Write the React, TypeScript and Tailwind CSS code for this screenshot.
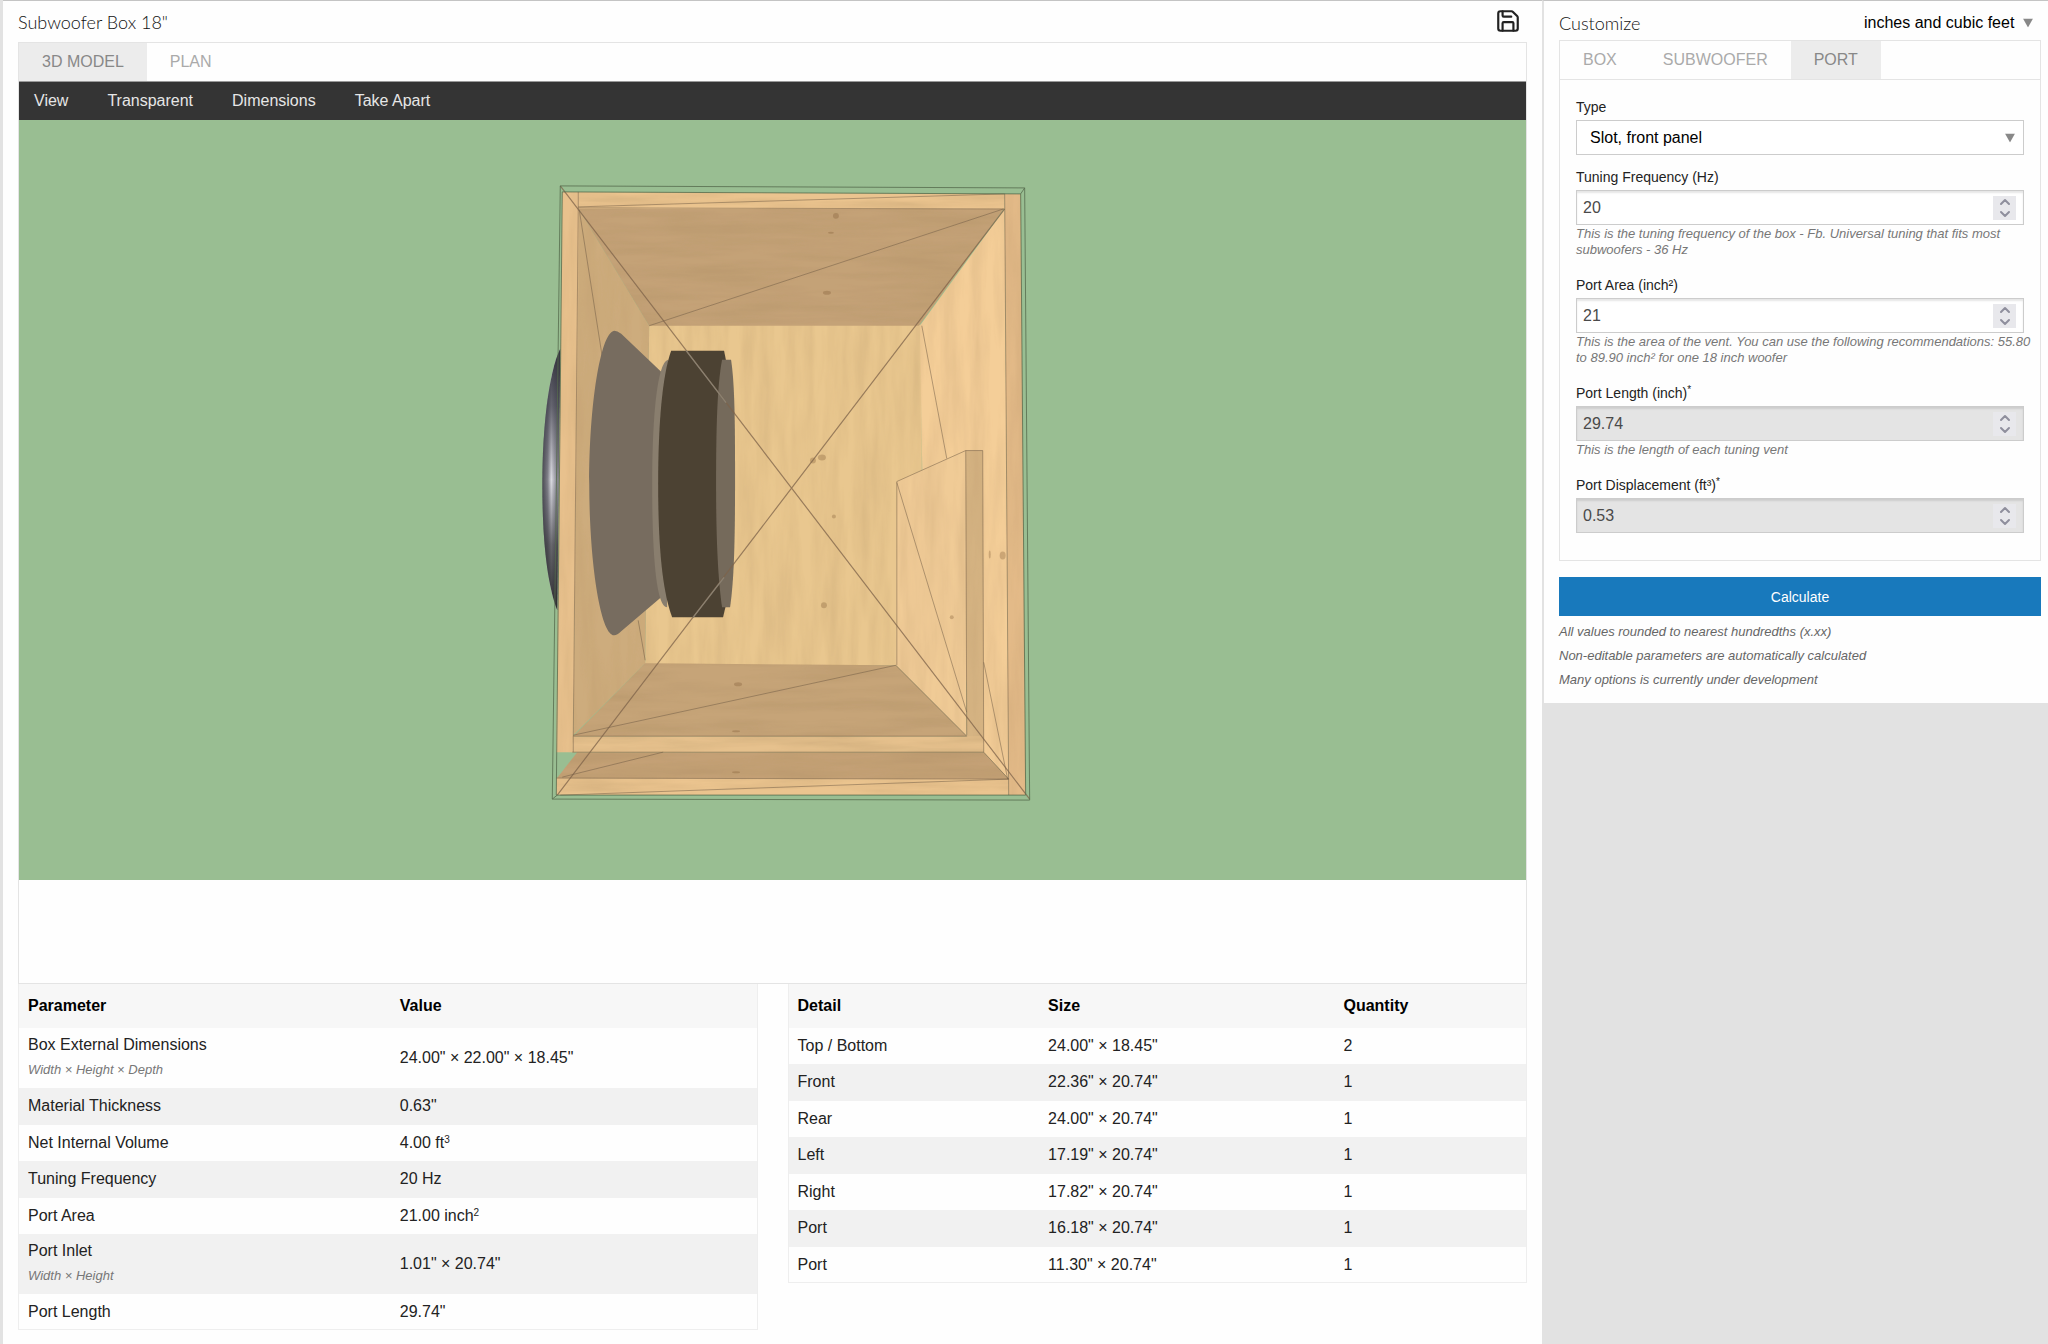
import { useState } from "react";
import type { ReactNode } from "react";
import { ChevronDown, ChevronUp, Save } from "lucide-react";

const MODEL_TABS = ["3D MODEL", "PLAN"] as const;
const PARAM_TABS = ["BOX", "SUBWOOFER", "PORT"] as const;
const MENU = ["View", "Transparent", "Dimensions", "Take Apart"];

type Param = { name: string; note?: string; value: ReactNode };

const params: Param[] = [
  { name: "Box External Dimensions", note: "Width × Height × Depth", value: '24.00" × 22.00" × 18.45"' },
  { name: "Material Thickness", value: '0.63"' },
  { name: "Net Internal Volume", value: <>4.00 ft<Sup>3</Sup></> },
  { name: "Tuning Frequency", value: "20 Hz" },
  { name: "Port Area", value: <>21.00 inch<Sup>2</Sup></> },
  { name: "Port Inlet", note: "Width × Height", value: '1.01" × 20.74"' },
  { name: "Port Length", value: '29.74"' },
];

const details = [
  ["Top / Bottom", '24.00" × 18.45"', "2"],
  ["Front", '22.36" × 20.74"', "1"],
  ["Rear", '24.00" × 20.74"', "1"],
  ["Left", '17.19" × 20.74"', "1"],
  ["Right", '17.82" × 20.74"', "1"],
  ["Port", '16.18" × 20.74"', "1"],
  ["Port", '11.30" × 20.74"', "1"],
];

const notes = [
  "All values rounded to nearest hundredths (x.xx)",
  "Non-editable parameters are automatically calculated",
  "Many options is currently under development",
];

function Sup({ children }: { children: ReactNode }) {
  return <sup className="text-[10px]">{children}</sup>;
}

function Tabs({
  tabs,
  active,
  onSelect,
}: {
  tabs: readonly string[];
  active: string;
  onSelect: (tab: string) => void;
}) {
  return (
    <div role="tablist" className="flex h-[38px]">
      {tabs.map((t) => (
        <button
          key={t}
          role="tab"
          aria-selected={t === active}
          onClick={() => onSelect(t)}
          className={`px-[23px] text-base ${
            t === active ? "bg-[#ececec] text-[#888888]" : "text-[#aaaaaa]"
          }`}
        >
          {t}
        </button>
      ))}
    </div>
  );
}

function NumberField({
  id,
  label,
  initial,
  hint,
  readOnly = false,
}: {
  id: string;
  label: ReactNode;
  initial: string;
  hint?: ReactNode;
  readOnly?: boolean;
}) {
  const [value, setValue] = useState(initial);
  const step = (by: number) => !readOnly && setValue(String(Number(value) + by));

  return (
    <div>
      <label htmlFor={id} className="block h-[25px] text-sm leading-6">
        {label}
      </label>
      <div
        className={`flex h-[35px] items-center border border-[#cccccc] pr-[7px] shadow-[inset_0_2px_2px_rgba(0,0,0,0.1)] ${
          readOnly ? "bg-[#e4e4e4]" : "bg-white"
        }`}
      >
        <input
          id={id}
          type="number"
          value={value}
          readOnly={readOnly}
          onChange={(e) => setValue(e.target.value)}
          className="min-w-0 flex-1 bg-transparent px-1.5 text-base text-[#4a4a4a] outline-none [appearance:textfield]"
        />
        <div className="flex h-6 w-[23px] flex-col items-center justify-center bg-[#e8e8ec] text-[#8f8f9d]">
          <button aria-label="Increase" onClick={() => step(1)}>
            <ChevronUp size={16} strokeWidth={3} className="-my-0.5 block" />
          </button>
          <button aria-label="Decrease" onClick={() => step(-1)}>
            <ChevronDown size={16} strokeWidth={3} className="-my-0.5 block" />
          </button>
        </div>
      </div>
      {hint && <p className="-mr-2 pt-px text-[13px] leading-4 text-[#777777] italic">{hint}</p>}
    </div>
  );
}

function BoxModel() {
  return (
    <svg
      viewBox="18 119 1509 761"
      className="block aspect-[1509/761] w-full bg-[#99be92]"
      role="img"
      aria-label="Subwoofer box"
    >
      <defs>
        <linearGradient id="dome" x1="0" y1="0" x2="1" y2="0">
          <stop offset="0" stopColor="#4a4a52" />
          <stop offset="0.3" stopColor="#85858d" />
          <stop offset="0.5" stopColor="#e4e4ea" />
          <stop offset="0.7" stopColor="#a9a9b2" />
          <stop offset="1" stopColor="#6c6670" />
        </linearGradient>
        <linearGradient id="domeShade" x1="0" y1="0" x2="0" y2="1">
          <stop offset="0" stopColor="#33333c" />
          <stop offset="0.22" stopColor="#3c3c48" stopOpacity="0.75" />
          <stop offset="0.5" stopColor="#444450" stopOpacity="0.05" />
          <stop offset="0.75" stopColor="#333338" stopOpacity="0.7" />
          <stop offset="1" stopColor="#2c2c30" />
        </linearGradient>
        <filter id="grainV" x="0" y="0" width="1" height="1">
          <feTurbulence type="fractalNoise" baseFrequency="0.07 0.009" numOctaves="4" seed="4" />
          <feColorMatrix values="0 0 0 0 0.5  0 0 0 0 0.32  0 0 0 0 0.15  0.55 0 0 0 -0.18" />
          <feComposite in2="SourceGraphic" operator="in" result="grain" />
          <feMerge>
            <feMergeNode in="SourceGraphic" />
            <feMergeNode in="grain" />
          </feMerge>
        </filter>
        <filter id="grainH" x="0" y="0" width="1" height="1">
          <feTurbulence type="fractalNoise" baseFrequency="0.009 0.09" numOctaves="4" seed="9" />
          <feColorMatrix values="0 0 0 0 0.4  0 0 0 0 0.26  0 0 0 0 0.12  0.6 0 0 0 -0.2" />
          <feComposite in2="SourceGraphic" operator="in" result="grain" />
          <feMerge>
            <feMergeNode in="SourceGraphic" />
            <feMergeNode in="grain" />
          </feMerge>
        </filter>
      </defs>

      {/* woofer frame in front of the baffle */}
      <path d="M560 348C548 372 542 430 542 483C542 540 547 585 557 610Z" fill="url(#dome)" />
      <path d="M560 348C548 372 542 430 542 483C542 540 547 585 557 610Z" fill="url(#domeShade)" />

      {/* rear panel and side walls */}
      <g filter="url(#grainV)">
        <path d="M649 324H922V665H645Z" fill="#e9c78f" />
        <path d="M578 207L649 325L645 663L573 735Z" fill="#cdac7d" />
        <path d="M1005 208L920 325L923 500L984 752L1009 779Z" fill="#f4ce98" />
        <path d="M897 481L966 450L967 736L896 665Z" fill="#f0cb96" />
        <path d="M966 450H983L984 737H967Z" fill="#d6b483" />
        <path d="M562 191H579L573 752H556Z" fill="#e8c18d" />
        <path d="M1005 193H1021L1026 795H1009Z" fill="#e3ba88" />
      </g>
      {/* top, shelf and bottom */}
      <g filter="url(#grainH)">
        <path d="M578 207L1004 208L919 325H649Z" fill="#c4a277" />
        <path d="M645 663L896 665L967 736H573Z" fill="#c6a478" />
        <path d="M577 752H984L1009 779H556Z" fill="#c4a176" />
        <path d="M578 191L1005 193V208H578Z" fill="#ebc48f" />
        <path d="M572 736H984V752H572Z" fill="#e6c18d" />
        <path d="M556 778L1009 779V795H556Z" fill="#ebc48f" />
      </g>

      {/* knots */}
      <g fill="#7a5530" opacity="0.3">
        <ellipse cx="836" cy="215" rx="3" ry="3" />
        <ellipse cx="831" cy="232" rx="3" ry="1" />
        <ellipse cx="827" cy="292" rx="4" ry="2" />
        <ellipse cx="822" cy="457" rx="4" ry="3" />
        <ellipse cx="813" cy="460" rx="3" ry="3" />
        <ellipse cx="824" cy="605" rx="3" ry="3" />
        <ellipse cx="834" cy="516" rx="2" ry="2" />
        <ellipse cx="1003" cy="555" rx="3" ry="4" />
        <ellipse cx="990" cy="554" rx="1" ry="4" />
        <ellipse cx="952" cy="617" rx="2" ry="2" />
        <ellipse cx="736" cy="772" rx="4" ry="1" />
        <ellipse cx="736" cy="731" rx="4" ry="1" />
        <ellipse cx="738" cy="684" rx="4" ry="2" />
      </g>

      {/* wall wireframe, partly hidden by the woofer */}
      <path d="M579 209L612 420M638 620L645 660" fill="none" stroke="#6f5a45" strokeOpacity="0.5" />

      {/* woofer */}
      <path
        d="M614 330C600 332 589 405 589 483C589 560 600 635 614 635Q617 635 621 631L661 597V371L621 333Q617 330 614 330Z"
        fill="#776c5f"
      />
      <path d="M668 359C656 362 652 425 652 483C652 545 655 607 667 607Z" fill="#897e6e" />
      <path d="M671 350H724L727 365V600L723 617H672C662 590 658 545 658 483C658 425 662 375 671 350Z" fill="#4c4233" />
      <path d="M722 359H731C735 385 735 430 735 483C735 540 734 580 730 607H722C718 580 716 540 716 483C716 430 717 385 722 359Z" fill="#756a5b" />

      {/* wireframe */}
      <g fill="none" stroke="#6f5a45" strokeOpacity="0.5">
        <path d="M578 191V207L573 736V752M1005 193L1009 795M578 207L1004 208M573 736H967M572 752H984M556 778L1009 779" />
        <path d="M578 206L1005 193M649 325L1004 208M922 325L947 458" />
        <path d="M573 735L896 665M896 665L967 736M562 777L663 752M560 795L1009 779" />
        <path d="M897 665V481L966 450H983L984 752M966 450L967 735M897 482L967 712M984 662L1008 779M984 752L1009 779" />
      </g>
      <g fill="none" stroke="#7d634a" strokeWidth="1.2" strokeOpacity="0.75">
        <path d="M560 185L1030 799M1005 208L557 795" />
      </g>
      <g fill="none" stroke="#566b4c" strokeOpacity="0.8">
        <path d="M560 185L1025 187L1030 800L552 799Z" />
        <path d="M562 191L1021 193L1026 795H556L562 191ZM1021 193L1025 187M552 799L557 795" />
      </g>
      {/* the diagonals turn lighter where they cross the motor */}
      <path d="M686 350L726 402M693 617L724 577" stroke="#8b8171" strokeWidth="1.4" />
    </svg>
  );
}

export default function App() {
  const [modelTab, setModelTab] = useState<string>("3D MODEL");
  const [paramTab, setParamTab] = useState<string>("PORT");

  return (
    <div className="flex min-h-screen bg-[#e2e2e2] pl-[3px] font-['Liberation_Sans',Arial,sans-serif] text-base text-[#222222]">
      <main className="min-w-0 flex-1 border-t border-[#c4c4c4] bg-[#fefefe] px-[15px] pb-3">
        <header className="flex h-[41px] items-center justify-between">
          <h1 className="font-['Lato',sans-serif] text-lg font-light text-[#111111]">
            Subwoofer Box 18"
          </h1>
          <button aria-label="Save" className="mr-1.5 pb-0.5 text-[#222222]">
            <Save size={26} strokeWidth={2} />
          </button>
        </header>

        <section className="border border-[#e4e4e4]">
          <Tabs tabs={MODEL_TABS} active={modelTab} onSelect={setModelTab} />
          <nav className="flex h-[39px] items-center gap-[39px] border-t border-[#999999] bg-[#343434] px-[15px] text-[#e6e6e6]">
            {MENU.map((item) => (
              <button key={item}>{item}</button>
            ))}
          </nav>
          <BoxModel />
          <div className="h-[103px]" />
        </section>

        <div className="grid grid-cols-2 items-start gap-[30px]">
          <table className="w-full table-fixed border-x border-b border-[#eeeeee] text-left">
            <thead>
              <tr className="h-11 bg-[#f7f7f7] text-black">
                <th className="w-1/2 px-[9px]">Parameter</th>
                <th className="px-3">Value</th>
              </tr>
            </thead>
            <tbody>
              {params.map((p) => (
                <tr key={p.name} className="h-9 even:h-[37px] even:bg-[#f1f1f1]">
                  <td className={`px-[9px] ${p.note ? "py-[5px]" : ""}`}>
                    {p.name}
                    {p.note && (
                      <p className="text-[13px] leading-[26px] text-[#777777] italic">{p.note}</p>
                    )}
                  </td>
                  <td className="px-3">{p.value}</td>
                </tr>
              ))}
            </tbody>
          </table>

          <table className="w-full table-fixed border-x border-b border-[#eeeeee] text-left">
            <thead>
              <tr className="h-11 bg-[#f7f7f7] text-black">
                <th className="w-[34%] px-[9px]">Detail</th>
                <th className="w-[40%] px-[9px]">Size</th>
                <th className="px-[9px]">Quantity</th>
              </tr>
            </thead>
            <tbody>
              {details.map(([name, size, qty]) => (
                <tr key={name + size} className="h-9 even:h-[37px] even:bg-[#f1f1f1]">
                  <td className="px-[9px]">{name}</td>
                  <td className="px-[9px]">{size}</td>
                  <td className="px-[9px]">{qty}</td>
                </tr>
              ))}
            </tbody>
          </table>
        </div>
      </main>

      <aside className="w-[506px] shrink-0">
        <div className="border-t border-l-2 border-t-[#c4c4c4] border-l-[#e2e2e2] bg-[#fefefe] pr-[7px] pb-[11px] pl-[15px]">
          <header className="flex h-[39px] items-center justify-between pt-1">
            <h2 className="font-['Lato',sans-serif] text-lg font-light text-[#111111]">Customize</h2>
            <div className="relative">
              <select
                aria-label="Units"
                className="block cursor-pointer appearance-none bg-transparent pr-[26px] text-base text-black outline-none"
              >
                <option>inches and cubic feet</option>
                <option>millimeters and liters</option>
              </select>
              <SelectArrow className="right-2" />
            </div>
          </header>

          <section className="border border-[#e4e4e4]">
            <div className="border-b border-[#e4e4e4]">
              <Tabs tabs={PARAM_TABS} active={paramTab} onSelect={setParamTab} />
            </div>
            <div className="flex flex-col px-4 pt-[14px] pb-[27px]">
              <label htmlFor="type" className="h-[26px] text-sm leading-[26px]">
                Type
              </label>
              <div className="relative mb-[10px]">
                <select
                  id="type"
                  className="block h-[35px] w-full appearance-none border border-[#cccccc] bg-white px-[13px] text-base text-black outline-none"
                >
                  <option>Slot, front panel</option>
                  <option>Round, front panel</option>
                </select>
                <SelectArrow className="right-[9px]" />
              </div>
              <div className="flex flex-col gap-[15px]">
                <NumberField
                  id="fb"
                  label="Tuning Frequency (Hz)"
                  initial="20"
                  hint="This is the tuning frequency of the box - Fb. Universal tuning that fits most subwoofers - 36 Hz"
                />
                <NumberField
                  id="area"
                  label="Port Area (inch²)"
                  initial="21"
                  hint="This is the area of the vent. You can use the following recommendations: 55.80 to 89.90 inch² for one 18 inch woofer"
                />
                <NumberField
                  id="length"
                  label={<>Port Length (inch)<Sup>*</Sup></>}
                  initial="29.74"
                  hint="This is the length of each tuning vent"
                  readOnly
                />
                <NumberField
                  id="displacement"
                  label={<>Port Displacement (ft³)<Sup>*</Sup></>}
                  initial="0.53"
                  readOnly
                />
              </div>
            </div>
          </section>

          <button className="mt-4 h-[39px] w-full bg-[#1879bc] text-sm text-white">
            Calculate
          </button>
          <div className="pt-1 text-[13px] leading-6 text-[#666666] italic">
            {notes.map((n) => (
              <p key={n}>{n}</p>
            ))}
          </div>
        </div>
      </aside>
    </div>
  );
}

function SelectArrow({ className }: { className: string }) {
  return (
    <svg
      viewBox="0 0 10 9"
      className={`pointer-events-none absolute top-1/2 h-[9px] w-[10px] -translate-y-1/2 fill-[#888888] ${className}`}
    >
      <path d="M0 0H10L5 9Z" />
    </svg>
  );
}
